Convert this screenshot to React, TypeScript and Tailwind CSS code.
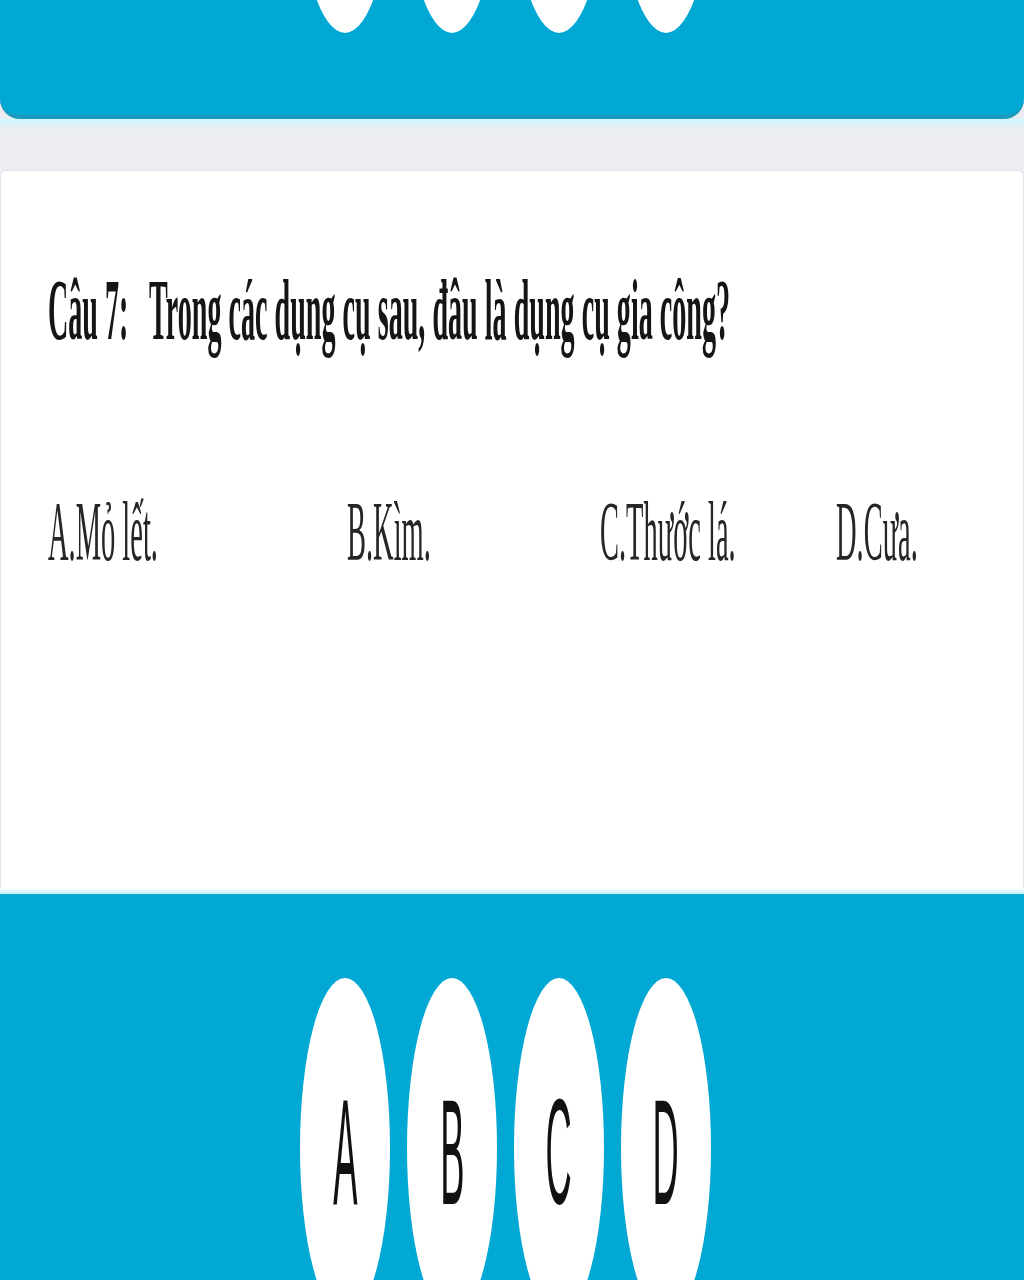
import React from 'react';

const letters = ['A', 'B', 'C', 'D'];

const options = [
  { label: 'A.Mỏ lết.', w: 'w-[299px]' },
  { label: 'B.Kìm.', w: 'w-[253px]' },
  { label: 'C.Thước lá.', w: 'w-[236px]' },
  { label: 'D.Cưa.', w: 'w-[140px]' },
];

const App: React.FC = () => {
  return (
    <div className="w-full h-[1280px] bg-[#ECEDF3] flex flex-col overflow-hidden">
      {/* top band with the tips of the previous answer pills */}
      <div className="h-[119px] shrink-0 bg-[#02A8D4] rounded-b-[20px] border-b-[4px] border-[#1d98bd] overflow-hidden">
        <div className="flex gap-[17px] pl-[300px] -mt-[267px]">
          {letters.map((l) => (
            <div key={l} className="w-[90px] h-[300px] rounded-[50%] bg-white" />
          ))}
        </div>
      </div>
      <div className="h-[12px] shrink-0 bg-gradient-to-b from-[#CCF6FB] to-[#ECEDF3]" />

      {/* question card */}
      <div className="mt-[39px] h-[718px] shrink-0 bg-white rounded-t-[6px] border-x border-t border-[#e2e3e8] pt-[96px] pl-[47px] font-['Liberation_Serif','Times_New_Roman',serif] text-[#151515]">
        <div className="h-[86px] w-[900px]">
          <span className="inline-block origin-left scale-x-[0.327] whitespace-pre font-bold text-[86px] leading-none">
            {'Câu 7:   Trong các dụng cụ sau, đâu là dụng cụ gia công?'}
          </span>
        </div>
        <div className="flex mt-[136px] h-[84px] text-[#262626]">
          {options.map((o) => (
            <div key={o.label} className={`${o.w} shrink-0`}>
              <span className="inline-block origin-left scale-x-[0.335] whitespace-pre text-[85px] leading-none">
                {o.label}
              </span>
            </div>
          ))}
        </div>
      </div>
      <div className="h-[6px] shrink-0 bg-gradient-to-b from-[#ffffff] to-[#bdeef8]" />

      {/* answer buttons */}
      <div className="flex-1 bg-[#02A8D4] pt-[84px] overflow-hidden">
        <div className="flex gap-[17px] pl-[300px]">
          {letters.map((l) => (
            <div
              key={l}
              className="w-[90px] h-[340px] shrink-0 rounded-[50%] bg-white flex justify-center pt-[98px] font-['Liberation_Sans',Arial,sans-serif] text-[#111]"
            >
              <span className="inline-block scale-x-[0.24] text-[151px] leading-none h-[151px]">{l}</span>
            </div>
          ))}
        </div>
      </div>
    </div>
  );
};

export default App;
